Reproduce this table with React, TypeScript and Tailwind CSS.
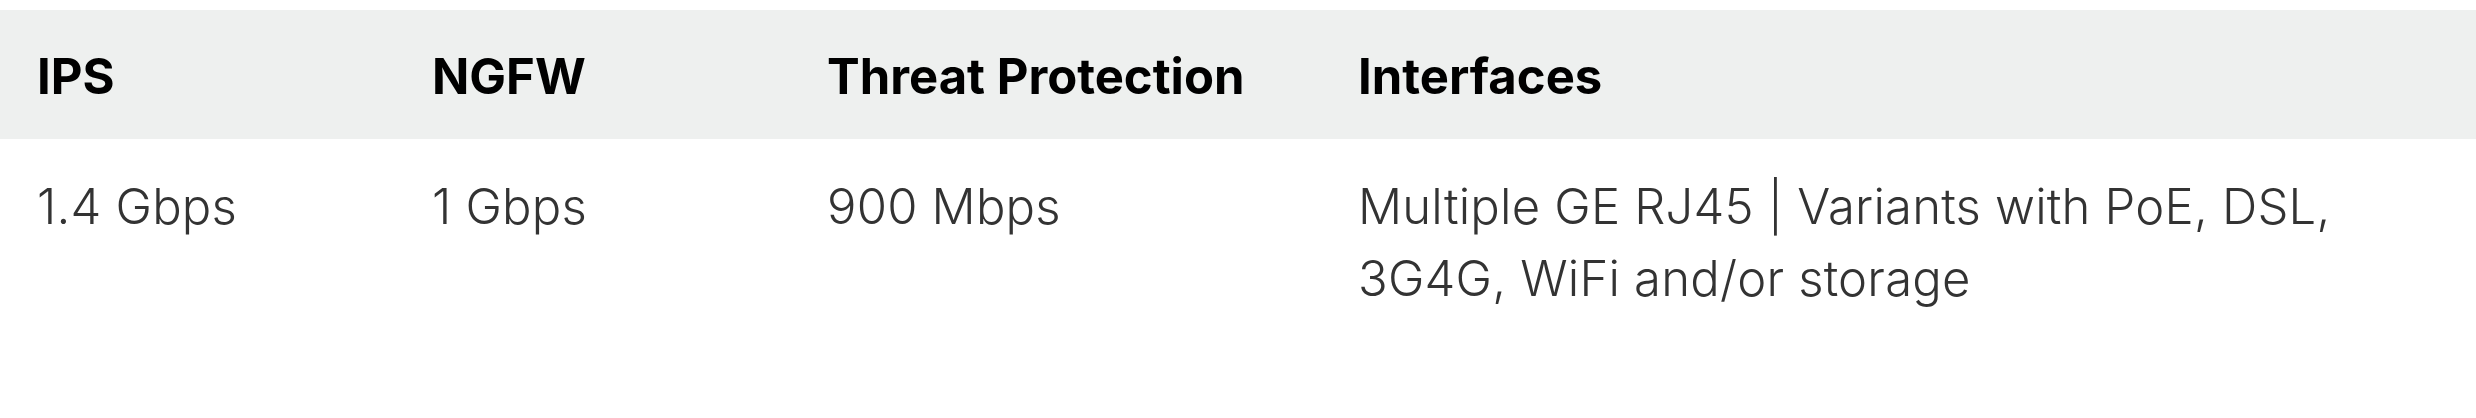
const headers = ["IPS", "NGFW", "Threat Protection", "Interfaces"];

const values = [
  "1.4 Gbps",
  "1 Gbps",
  "900 Mbps",
  "Multiple GE RJ45 | Variants with PoE, DSL, 3G4G, WiFi and/or storage",
];

export default function App() {
  return (
    <div className="w-full bg-white pt-[10px] font-['Inter',sans-serif]">
      <div className="grid grid-cols-[395px_395px_531px_1fr] bg-[#eef0ef]">
        {headers.map((h) => (
          <div
            key={h}
            className="px-[37px] pt-[31px] pb-[26px] text-[49px] leading-[72px] font-bold text-black"
          >
            {h}
          </div>
        ))}
      </div>
      <div className="grid grid-cols-[395px_395px_531px_1fr]">
        {values.map((v) => (
          <div
            key={v}
            className="px-[37px] pt-[32px] pb-[32px] text-[49px] leading-[72px] tracking-[0.2px] font-light text-[#333333]"
          >
            {v}
          </div>
        ))}
      </div>
    </div>
  );
}
